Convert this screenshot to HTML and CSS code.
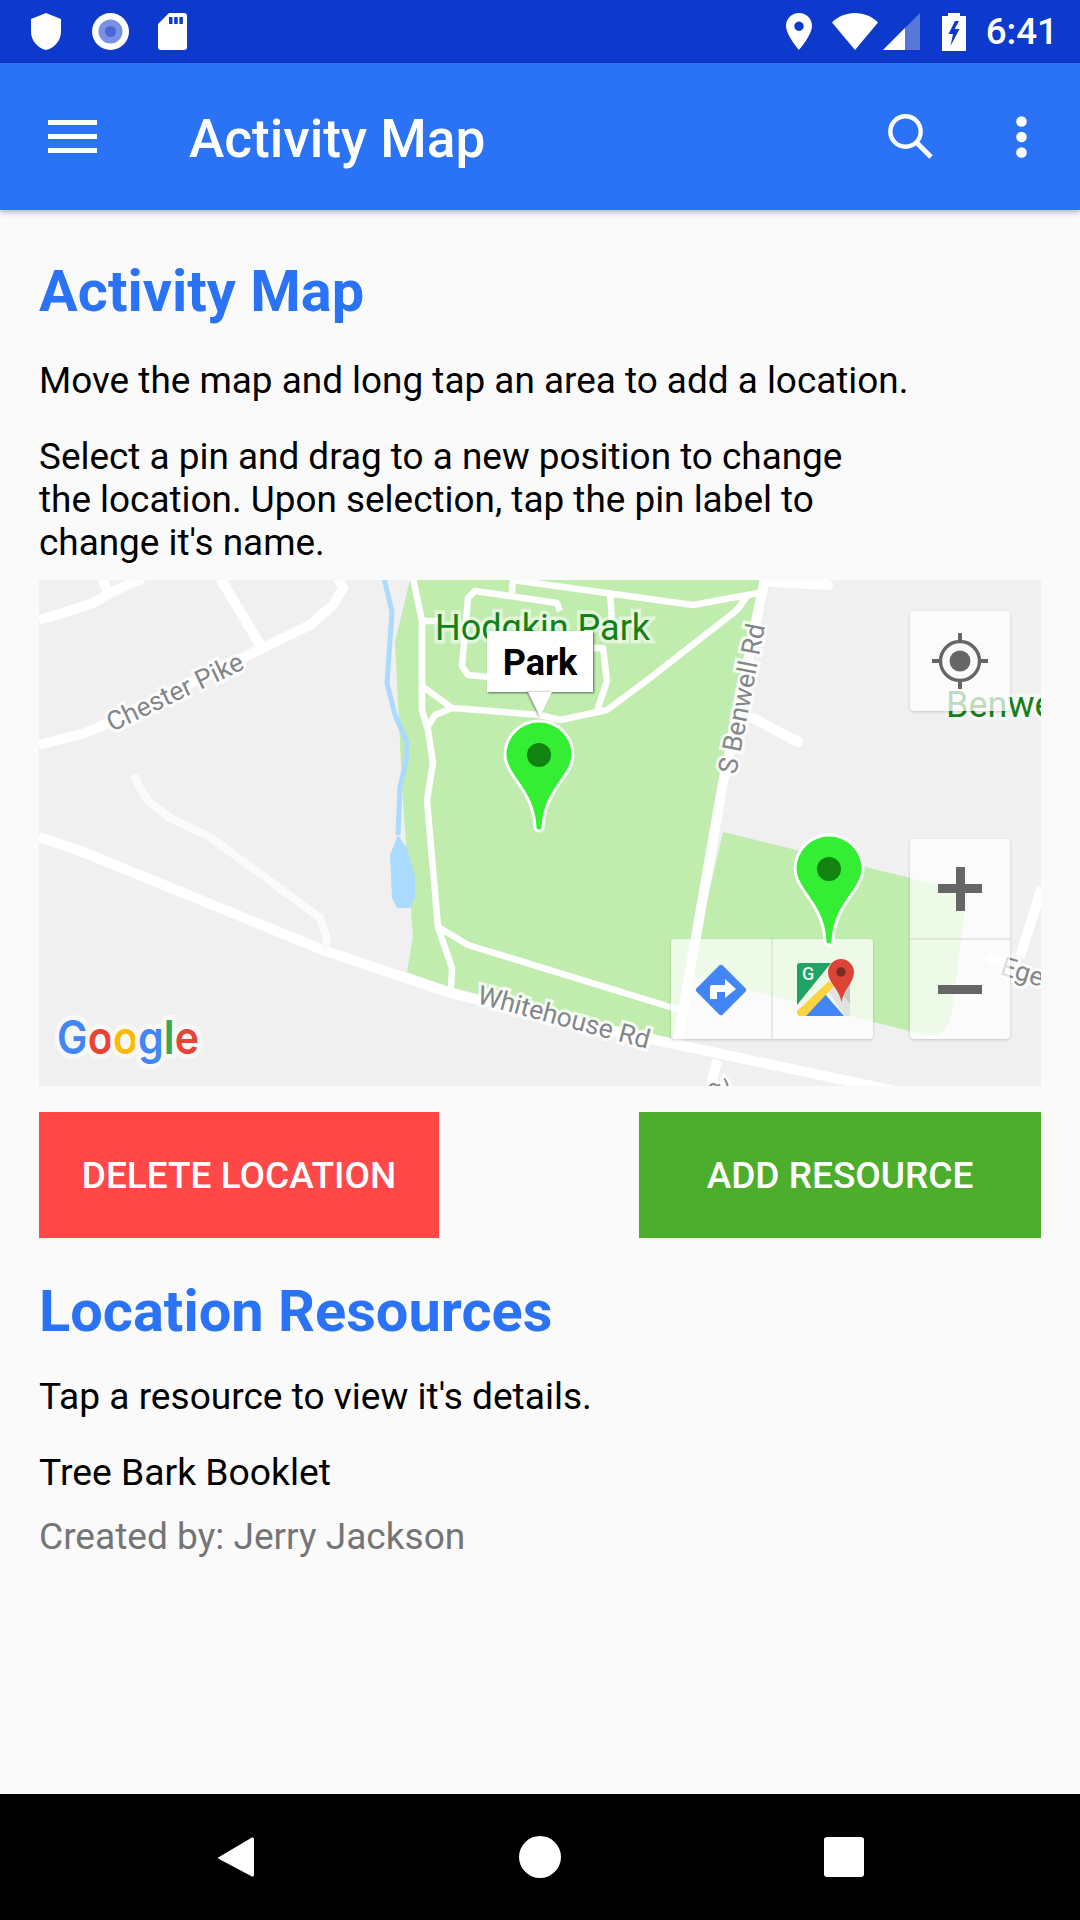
FILE: index.html
```html
<!DOCTYPE html>
<html lang="en">
<head>
<meta charset="utf-8">
<title>Activity Map</title>
<link rel="stylesheet" href="styles.css">
</head>
<body>
<div class="screen">
  <header class="status-bar">
    <div class="status-left">
      <svg class="ic-shield" viewBox="0 0 30 37"><path d="M15 0 L30 6 V19 C30 28 22 36 15 37 C8 36 0 28 0 19 V6 Z" fill="#fff"/></svg>
      <svg class="ic-disc" viewBox="0 0 37 37"><circle cx="18.5" cy="18.5" r="18.5" fill="#fff"/><circle cx="18.5" cy="18.5" r="12" fill="#7a90e3"/><circle cx="18.5" cy="18.5" r="5.5" fill="#4a67d8"/></svg>
      <svg class="ic-sd" viewBox="0 0 29 37"><path d="M11 0 H26 Q29 0 29 3 V34 Q29 37 26 37 H3 Q0 37 0 34 V11 Z" fill="#fff"/><path d="M11 4 h3.5 v7 h-3.5z M16.2 4 h3.5 v7 h-3.5z M21.4 4 h3.5 v7 h-3.5z" fill="#0e39cd"/></svg>
    </div>
    <div class="status-right">
      <svg class="ic-pin" viewBox="0 0 26 37"><path fill-rule="evenodd" d="M13 0 C20.5 0 26 5.6 26 13 C26 22 13 37 13 37 C13 37 0 22 0 13 C0 5.6 5.5 0 13 0Z M13 8.5 a4.7 4.7 0 1 0 0.01 0Z" fill="#fff"/></svg>
      <svg class="ic-wifi" viewBox="0 0 46 37"><path d="M0 9.5 C6 3.5 14 0 23 0 C32 0 40 3.5 46 9.5 L23 37 Z" fill="#fff"/></svg>
      <svg class="ic-signal" viewBox="0 0 37 37"><path d="M0 37 L37 0 V37 Z" fill="#5877da"/><path d="M0 37 L22 15 V37 Z" fill="#fff"/></svg>
      <svg class="ic-batt" viewBox="0 0 24 38"><path fill-rule="evenodd" d="M6 0 H18 V3 H24 V38 H0 V3 H6 Z M13 8 L6.5 21 H11 L8.5 33 L17.5 16 H12.7 L17 8 Z" fill="#fff"/></svg>
      <span class="clock">6:41</span>
    </div>
  </header>

  <nav class="app-bar">
    <div class="hamburger"><i></i><i></i><i></i></div>
    <div class="app-title">Activity Map</div>
    <svg class="ic-search" viewBox="0 0 46 46"><circle cx="17.5" cy="17.5" r="15.2" fill="none" stroke="#fff" stroke-width="4.4"/><path d="M28.5 28.5 L43 43" stroke="#fff" stroke-width="5" fill="none"/></svg>
    <svg class="ic-more" viewBox="0 0 11 42"><circle cx="5.5" cy="5.5" r="5.3" fill="#fff"/><circle cx="5.5" cy="21" r="5.3" fill="#fff"/><circle cx="5.5" cy="36.5" r="5.3" fill="#fff"/></svg>
  </nav>

  <main class="content">
    <h1 class="heading">Activity Map</h1>
    <p class="body-text first">Move the map and long tap an area to add a location.</p>
    <p class="body-text select">Select a pin and drag to a new position to change the location. Upon selection, tap the pin label to change it's name.</p>

    <section class="map">
      <svg class="map-base" viewBox="39 580 1002 506">
        <rect x="39" y="580" width="1002" height="506" fill="#f0f0f0"/>
        <path class="park" d="M410 580 L395 642 L400 743 L403 803 L413 937 L407 972 L450 987 L550 1012 L680 1042 L765 580 Z"/>
        <path class="park" d="M723 832 L967 892 L952 1012 Q948 1038 925 1035 L690 975 Z"/>
        <g class="road">
          <path d="M39 620 L63 613 L93 603 L110 593 L143 578"/>
          <path d="M102 578 L108 592"/>
          <path d="M220 578 L262 648"/>
          <path d="M39 745 L85 733 L110 722 L263 648 L310 625 L333 605 L343 588 L338 578"/>
          <path d="M39 837 L83 852 L323 950 L450 993 L550 1017 L670 1043 L900 1092"/>
          <path d="M765 578 L723 783 L677 1045"/>
          <path d="M772 582 L828 585" stroke-linecap="round"/>
          <path d="M753 718 L798 742" stroke-linecap="round"/>
          <path d="M1042 887 L1020 957"/>
          <path d="M990 958 L1003 963" stroke-linecap="round"/>
          <path d="M717 1060 L710 1090"/>
        </g>
        <path class="lane" d="M135 778 L147 800 L170 818 L210 837 L320 918 L327 938 L325 947"/>
        <path class="water-line" d="M384 578 L392 612 L387 683 L395 715 L407 742 L407 757 L400 787 L398 835"/>
        <path class="water" d="M398 835 L407 848 L415 877 L415 898 L410 908 L397 908 L392 898 L390 855 Z"/>
        <g class="path-road">
          <path d="M413 578 L422 621 L422 710 L428 730 L433 763 L427 800 L438 927 L452 968 L451 989"/>
          <path d="M438 927 L468 945 L680 1010"/>
          <path d="M422 686 L452 708 L540 715 L560 720 L607 710 L650 678 L737 610 L747 596"/>
          <path d="M452 708 L435 715 L428 726"/>
          <path d="M513 578 L512 593"/>
          <path d="M560 611 L557 603 L475 591 L468 598 L462 666 L468 675 L490 677"/>
          <path d="M422 621 L440 621"/>
          <path d="M513 580 L693 605 L758 593"/>
          <path d="M610 593 L612 621"/>
          <path d="M590 648 L603 648 L607 681 L597 711"/>
        </g>
        <text class="lbl-park" x="435" y="640">Hodgkin Park</text>
        <text class="lbl-park" x="946" y="717">Benwell</text>
        <text class="lbl-road" transform="translate(112 732) rotate(-25.5)">Chester Pike</text>
        <text class="lbl-road" transform="translate(736 775) rotate(-79)">S Benwell Rd</text>
        <text class="lbl-road" transform="translate(476 1003) rotate(15)">Whitehouse Rd</text>
        <text class="lbl-road" transform="translate(999 974) rotate(17)">Ege</text>
        <text class="lbl-road" transform="translate(705 1096) rotate(10)">g)</text>
        <text class="google" x="57" y="1054" textLength="142" lengthAdjust="spacingAndGlyphs"><tspan fill="#4285f4">G</tspan><tspan fill="#ea4335">o</tspan><tspan fill="#fbbc05">o</tspan><tspan fill="#4285f4">g</tspan><tspan fill="#34a853">l</tspan><tspan fill="#ea4335">e</tspan></text>
      </svg>

      <div class="ctl ctl-locate">
        <svg viewBox="0 0 56 56"><circle cx="28" cy="28" r="19.5" fill="none" stroke="#666" stroke-width="3.4"/><circle cx="28" cy="28" r="10.5" fill="#666"/><path d="M28 0 V8 M28 48 V56 M0 28 H8 M48 28 H56" stroke="#666" stroke-width="4"/></svg>
      </div>

      <div class="ctl ctl-zoom">
        <div class="zoom-cell"><span class="sign plus"></span></div>
        <div class="zoom-cell"><span class="sign"></span></div>
      </div>

      <div class="ctl ctl-links">
        <div class="link-cell">
          <svg class="ic-dir" viewBox="-27 -27 54 54"><rect x="-18.5" y="-18.5" width="37" height="37" rx="2.5" transform="rotate(45)" fill="#4285f4"/><path d="M-11 9 V-3 Q-11 -5 -9 -5 H4 V-11 L15 -1 L4 8 V2 H-4 V9 Z" fill="#fff"/></svg>
        </div>
        <div class="link-cell">
          <svg class="ic-gmaps" viewBox="0 0 57 57">
            <path d="M3 4 H34 L0 46 V7 Q0 4 3 4Z" fill="#1fa463"/>
            <path d="M30 26 H53 V57 H50 Z" fill="#c8c8c8"/>
            <path d="M29 29 L37 24 L53 45 V57 H48 Z" fill="#e2e2e2"/>
            <path d="M7 57 L27 34 L47 57 Z" fill="#4285f4"/>
            <path d="M32 22 L37 27 L9 57 H3 Q0 57 0 53 V52 Z" fill="#fbd440"/>
            <path d="M44 0 C51 0 57 6 57 13 C57 24 47 29 44.500 43 C42 29 31 24 31 13 C31 6 37 0 44 0Z" fill="#db4437"/>
            <circle cx="44" cy="13" r="4.700" fill="#7b2c22"/>
            <text class="gmaps-g" x="5" y="21">G</text>
          </svg>
        </div>
      </div>

      <svg class="map-top" viewBox="39 580 1002 506">
        <g class="pin" transform="translate(539 755)"><path d="M0 -34 C18.800 -34 34 -18.800 34 0 C34 8 30 15 25 22 C15 36 5 50 4 72 A4 4 0 0 1 -4 72 C-5 50 -15 36 -25 22 C-30 15 -34 8 -34 0 C-34 -18.800 -18.800 -34 0 -34Z"/><circle r="12"/></g>
        <g class="pin" transform="translate(829 869)"><path d="M0 -34 C18.800 -34 34 -18.800 34 0 C34 8 30 15 25 22 C15 36 5 50 4 72 A4 4 0 0 1 -4 72 C-5 50 -15 36 -25 22 C-30 15 -34 8 -34 0 C-34 -18.800 -18.800 -34 0 -34Z"/><circle r="12"/></g>
      </svg>

      <div class="info-window">Park</div>
    </section>

    <div class="actions">
      <button class="btn btn-delete">DELETE LOCATION</button>
      <button class="btn btn-add">ADD RESOURCE</button>
    </div>

    <h2 class="heading second">Location Resources</h2>
    <p class="body-text tap">Tap a resource to view it's details.</p>
    <p class="body-text item">Tree Bark Booklet</p>
    <p class="body-text meta">Created by: Jerry Jackson</p>
  </main>

  <footer class="nav-bar">
    <svg class="ic-back" viewBox="0 0 38 42"><path d="M2 21 L35 1.500 Q37 1 37 3 V39 Q37 41 35 40.500 L2 23 Q0 21 2 21Z" fill="#fff"/></svg>
    <span class="ic-home"></span>
    <span class="ic-recent"></span>
  </footer>
</div>
</body>
</html>
```

FILE: styles.css
```css
* { box-sizing: border-box; }
html, body { margin: 0; padding: 0; }
body { background: #fafafa; font-family: Roboto, "Liberation Sans", sans-serif; }
.screen { width: 1080px; height: 1920px; display: flex; flex-direction: column; overflow: hidden; }

.status-bar { height: 63px; flex: none; background: #0e39cd; display: flex; justify-content: space-between; align-items: center; color: #fff; padding: 0 22px 0 31px; }
.status-left, .status-right { display: flex; align-items: center; height: 37px; }
.status-left svg, .status-right svg { display: block; flex: none; }
.ic-shield { width: 30px; height: 37px; }
.ic-disc { width: 37px; height: 37px; margin-left: 31px; }
.ic-sd { width: 29px; height: 37px; margin-left: 29px; }
.ic-pin { width: 26px; height: 37px; }
.ic-wifi { width: 46px; height: 37px; margin-left: 20px; }
.ic-signal { width: 37px; height: 37px; margin-left: 5px; }
.ic-batt { width: 24px; height: 38px; margin-left: 22px; }
.clock { font-size: 36.750px; font-weight: 500; margin-left: 20px; line-height: 37px; }

.app-bar { height: 147px; flex: none; background: #2a73f6; color: #fff; display: flex; align-items: center; padding: 0 53px 0 48px; box-shadow: 0 2px 6px rgba(0,0,0,.3); position: relative; z-index: 2; }
.hamburger { width: 49px; display: flex; flex-direction: column; gap: 9px; }
.hamburger i { display: block; height: 5px; background: #fff; }
.app-title { font-size: 53.200px; font-weight: 500; margin-left: 92px; flex: 1; padding-top: 4px; }
.ic-search { width: 46px; height: 46px; }
.ic-more { width: 11px; height: 42px; margin-left: 82px; }

.content { flex: 1; padding: 0 39px; }
.heading { margin: 0; color: #2a73f6; font-size: 57.750px; font-weight: 700; line-height: 66px; }
h1.heading { margin-top: 48px; }
.second { margin-top: 40px; }
.body-text { margin: 0; font-size: 37px; line-height: 43px; color: #000; }
.first { margin-top: 35px; font-size: 36.900px; }
.select { margin-top: 33px; max-width: 840px; font-size: 36.900px; }
.tap { margin-top: 31px; font-size: 37.100px; }
.item { margin-top: 33px; font-size: 37.300px; }
.meta { margin-top: 21px; color: #757575; font-size: 37.100px; }

.map { position: relative; margin-top: 16px; height: 506px; overflow: hidden; }
.map-base, .map-top { display: block; width: 1002px; height: 506px; }
.map-top { position: absolute; left: 0; top: 0; }
.park { fill: #c0ecae; }
.road path { fill: none; stroke: #fff; stroke-width: 10; stroke-linejoin: round; }
.lane { fill: none; stroke: #fbfbfb; stroke-width: 8; stroke-linecap: round; stroke-linejoin: round; }
.water-line { fill: none; stroke: #aadaff; stroke-width: 5; stroke-linejoin: round; }
.water { fill: #aadaff; }
.path-road path { fill: none; stroke: #fff; stroke-width: 6.500; stroke-linejoin: round; }
.lbl-park { font-family: Roboto, sans-serif; font-size: 36px; fill: #14801a; stroke: rgba(255,255,255,.55); stroke-width: 7px; paint-order: stroke; }
.lbl-road { font-family: Roboto, sans-serif; font-size: 26.500px; fill: #84868a; stroke: rgba(255,255,255,.8); stroke-width: 6px; paint-order: stroke; }
.google { font-family: Inter, Lato, sans-serif; font-size: 46px; font-weight: 600; stroke: #f8f8f8; stroke-width: 10px; stroke-linejoin: round; paint-order: stroke; }
.pin path { fill: #33ee33; stroke: #fff; stroke-width: 3; }
.pin circle { fill: #128210; }

.ctl { position: absolute; background: rgba(255,255,255,.72); border-radius: 4px; box-shadow: 0 1px 3px rgba(0,0,0,.18); }
.ctl-locate { left: 871px; top: 31px; width: 100px; height: 100px; display: flex; align-items: center; justify-content: center; }
.ctl-locate svg { width: 56px; height: 56px; }
.ctl-zoom { left: 871px; top: 259px; width: 100px; height: 200px; display: flex; flex-direction: column; }
.zoom-cell { flex: 1; display: flex; align-items: center; justify-content: center; }
.zoom-cell + .zoom-cell { border-top: 2px solid rgba(0,0,0,.07); }
.sign { display: block; position: relative; width: 44px; height: 9px; background: #666; }
.plus::after { content: ""; position: absolute; left: 17.500px; top: -17.500px; width: 9px; height: 44px; background: #666; }
.ctl-links { left: 632px; top: 359px; width: 202px; height: 100px; display: flex; }
.link-cell { flex: 1; position: relative; }
.link-cell + .link-cell { border-left: 2px solid rgba(0,0,0,.07); }
.ic-dir { position: absolute; left: 23px; top: 24px; width: 54px; height: 54px; }
.ic-gmaps { position: absolute; left: 24px; top: 20px; width: 57px; height: 57px; overflow: visible; }
.gmaps-g { font-family: Roboto, sans-serif; font-size: 18px; font-weight: 500; fill: #e8f5ee; }

.info-window { position: absolute; left: 448px; top: 51px; width: 106px; height: 61px; background: #fff; font-size: 36px; font-weight: 700; color: #000; text-align: center; line-height: 65px; box-shadow: 1px 1px 2px rgba(0,0,0,.55); }
.info-window::after { content: ""; position: absolute; left: 41px; top: 61px; width: 0; height: 0; border-left: 12px solid transparent; border-right: 12px solid transparent; border-top: 25px solid #fff; filter: drop-shadow(-1px 0 1px rgba(0,0,0,.45)); }

.actions { display: flex; justify-content: space-between; margin-top: 26px; }
.btn { height: 126px; border: 0; padding: 0; border-radius: 0; color: #fff; font-family: Roboto, sans-serif; font-size: 37px; font-weight: 500; box-shadow: 0 1px 2px rgba(0,0,0,.06); }
.btn-delete { width: 400px; background: #ff4848; }
.btn-add { width: 402px; background: #4dae2d; }

.nav-bar { height: 126px; flex: none; background: #000; position: relative; display: flex; align-items: center; justify-content: center; }
.ic-back { position: absolute; left: 217px; top: 42px; width: 38px; height: 42px; }
.ic-home { position: absolute; left: 519px; top: 42px; width: 42px; height: 42px; border-radius: 50%; background: #fff; }
.ic-recent { position: absolute; left: 824px; top: 43px; width: 40px; height: 40px; border-radius: 3px; background: #fff; }
```
